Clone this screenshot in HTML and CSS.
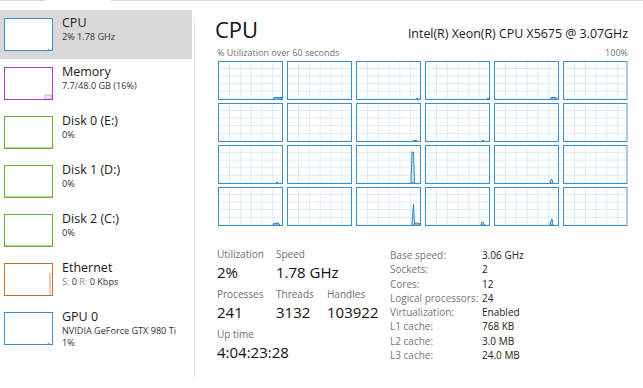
FILE: index.html
```html
<!DOCTYPE html>
<html lang="en">
<head>
    <meta charset="UTF-8">
    <meta name="viewport" content="width=device-width, initial-scale=1.0">
    <title>Task Manager - Performance</title>
    <link rel="stylesheet" href="styles.css">
</head>
<body>
    <div class="tabline">
        <span class="tabline-left"></span>
        <span class="tabline-gap"></span>
        <span class="tabline-right"></span>
    </div>

    <div class="app">
        <ul class="sidebar">
            <li class="item selected">
                <div class="thumb thumb-cpu">
                    <svg viewBox="0 0 47 31"><path d="M43,31 L43.5,30 L44,31Z" fill="#3a8fc8" stroke="#3a8fc8" stroke-width="0.8"/></svg>
                </div>
                <div class="item-text">
                    <div class="item-title">CPU</div>
                    <div class="item-sub">2% 1.78 GHz</div>
                </div>
            </li>
            <li class="item">
                <div class="thumb thumb-mem">
                    <svg viewBox="0 0 47 31"><path d="M40,31 L40,27 L47,27 L47,31Z" fill="#f1e4f6" stroke="#c792db" stroke-width="0.8"/></svg>
                </div>
                <div class="item-text">
                    <div class="item-title">Memory</div>
                    <div class="item-sub">7.7/48.0 GB (16%)</div>
                </div>
            </li>
            <li class="item">
                <div class="thumb thumb-disk">
                    <svg viewBox="0 0 47 31"><path d="M0,30.5 L47,30.5" stroke="#b9dd9f" stroke-width="1"/></svg>
                </div>
                <div class="item-text">
                    <div class="item-title">Disk 0 (E:)</div>
                    <div class="item-sub">0%</div>
                </div>
            </li>
            <li class="item">
                <div class="thumb thumb-disk">
                    <svg viewBox="0 0 47 31"><path d="M0,30.5 L47,30.5" stroke="#b9dd9f" stroke-width="1"/></svg>
                </div>
                <div class="item-text">
                    <div class="item-title">Disk 1 (D:)</div>
                    <div class="item-sub">0%</div>
                </div>
            </li>
            <li class="item">
                <div class="thumb thumb-disk">
                    <svg viewBox="0 0 47 31"><path d="M0,30.5 L47,30.5" stroke="#b9dd9f" stroke-width="1"/><path d="M42,31 L42.5,30 L43,31Z" fill="#66b032"/></svg>
                </div>
                <div class="item-text">
                    <div class="item-title">Disk 2 (C:)</div>
                    <div class="item-sub">0%</div>
                </div>
            </li>
            <li class="item">
                <div class="thumb thumb-eth">
                    <svg viewBox="0 0 47 31"><path d="M44.5,31 L44.5,9 L45.5,9 L45.5,31Z" fill="#f0d4b8" stroke="#e3b98f" stroke-width="0.6"/></svg>
                </div>
                <div class="item-text">
                    <div class="item-title">Ethernet</div>
                    <div class="item-sub"><span class="dim">S:</span> 0 <span class="dim">R:</span> 0 Kbps</div>
                </div>
            </li>
            <li class="item">
                <div class="thumb thumb-gpu">
                    <svg viewBox="0 0 47 31"><path d="M43,31 L43.5,30 L44,31Z" fill="#3a8fc8" stroke="#3a8fc8" stroke-width="0.8"/></svg>
                </div>
                <div class="item-text">
                    <div class="item-title">GPU 0</div>
                    <div class="item-sub">NVIDIA GeForce GTX 980 Ti</div>
                    <div class="item-sub">1%</div>
                </div>
            </li>
        </ul>

        <div class="divider"></div>

        <main class="detail">
            <div class="detail-head">
                <h1>CPU</h1>
                <span class="model">Intel(R) Xeon(R) CPU X5675 @ 3.07GHz</span>
            </div>
            <div class="graph-caption">
                <span>% Utilization over 60 seconds</span>
                <span>100%</span>
            </div>

            <div class="graphs">
                <!-- row 1 -->
                <div class="graph"><svg viewBox="0 0 63 37" preserveAspectRatio="none"><path d="M54,37 L55,35.5 L63,35.5 L63,37Z"/></svg></div>
                <div class="graph"></div>
                <div class="graph"><svg viewBox="0 0 63 37" preserveAspectRatio="none"><path d="M59,37 L60,36 L61,37Z"/></svg></div>
                <div class="graph"><svg viewBox="0 0 63 37" preserveAspectRatio="none"><path d="M61,37 L62,36 L63,37Z"/></svg></div>
                <div class="graph"><svg viewBox="0 0 63 37" preserveAspectRatio="none"><path d="M55,37 L56,35.5 L61,35.5 L62,37Z"/></svg></div>
                <div class="graph"></div>
                <!-- row 2 -->
                <div class="graph"></div>
                <div class="graph"></div>
                <div class="graph"><svg viewBox="0 0 63 37" preserveAspectRatio="none"><path d="M56,37 L57,36 L58,37 L59,36 L60,37Z"/></svg></div>
                <div class="graph"><svg viewBox="0 0 63 37" preserveAspectRatio="none"><path d="M56,37 L57,36 L58,37Z"/></svg></div>
                <div class="graph"></div>
                <div class="graph"></div>
                <!-- row 3 -->
                <div class="graph"><svg viewBox="0 0 63 37" preserveAspectRatio="none"><path d="M57,37 L58,36 L59,37Z"/></svg></div>
                <div class="graph"></div>
                <div class="graph"><svg viewBox="0 0 63 37" preserveAspectRatio="none"><path d="M54,37 L55,6 L56.5,6 L57.5,37Z"/></svg></div>
                <div class="graph"></div>
                <div class="graph"><svg viewBox="0 0 63 37" preserveAspectRatio="none"><path d="M55,37 L56,33.5 L57,33.5 L58,37Z"/></svg></div>
                <div class="graph"></div>
                <!-- row 4 -->
                <div class="graph"><svg viewBox="0 0 63 37" preserveAspectRatio="none"><path d="M54,37 L55,35 L56,36 L57,34.5 L58,36 L59,34.5 L60,36 L61,37Z"/></svg></div>
                <div class="graph"></div>
                <div class="graph"><svg viewBox="0 0 63 37" preserveAspectRatio="none"><path d="M55,37 L56.5,16 L57.5,36 L59,35 L63,35.5 L63,37Z"/></svg></div>
                <div class="graph"><svg viewBox="0 0 63 37" preserveAspectRatio="none"><path d="M55,37 L56,34 L57,34 L58,36 L59,37Z"/></svg></div>
                <div class="graph"><svg viewBox="0 0 63 37" preserveAspectRatio="none"><path d="M55,37 L57,31 L58,37Z"/></svg></div>
                <div class="graph"></div>
            </div>

            <div class="stats">
                <div class="stats-main">
                    <div class="stat-row">
                        <div class="stat col-a">
                            <div class="stat-label">Utilization</div>
                            <div class="stat-value">2%</div>
                        </div>
                        <div class="stat col-b">
                            <div class="stat-label">Speed</div>
                            <div class="stat-value">1.78 GHz</div>
                        </div>
                    </div>
                    <div class="stat-row">
                        <div class="stat col-a">
                            <div class="stat-label">Processes</div>
                            <div class="stat-value">241</div>
                        </div>
                        <div class="stat col-b">
                            <div class="stat-label">Threads</div>
                            <div class="stat-value">3132</div>
                        </div>
                        <div class="stat">
                            <div class="stat-label">Handles</div>
                            <div class="stat-value">103922</div>
                        </div>
                    </div>
                    <div class="stat-row">
                        <div class="stat">
                            <div class="stat-label">Up time</div>
                            <div class="stat-value">4:04:23:28</div>
                        </div>
                    </div>
                </div>

                <div class="specs">
                    <span class="spec-label">Base speed:</span><span>3.06 GHz</span>
                    <span class="spec-label">Sockets:</span><span>2</span>
                    <span class="spec-label">Cores:</span><span>12</span>
                    <span class="spec-label">Logical processors:</span><span>24</span>
                    <span class="spec-label">Virtualization:</span><span>Enabled</span>
                    <span class="spec-label">L1 cache:</span><span>768 KB</span>
                    <span class="spec-label">L2 cache:</span><span>3.0 MB</span>
                    <span class="spec-label">L3 cache:</span><span>24.0 MB</span>
                </div>
            </div>
        </main>
    </div>
</body>
</html>
```

FILE: styles.css
```css
body {
    font-family: "Open Sans", "Noto Sans", sans-serif;
    background-color: #fff;
    color: #1a1a1a;
    margin: 0;
    padding: 0;
    width: 643px;
    height: 388px;
    overflow: hidden;
}

/* tab strip bottom line, with a gap under the selected tab */
.tabline {
    display: flex;
    height: 1px;
}
.tabline-left {
    width: 45px;
    background-color: #dadada;
}
.tabline-gap {
    width: 66px;
}
.tabline-right {
    flex: 1;
    background-color: #dadada;
}

.app {
    display: flex;
    margin-top: 9px;
}

/* left list */
.sidebar {
    list-style: none;
    margin: 0 2px 0 0;
    padding: 0;
    width: 192px;
}
.item {
    display: flex;
    box-sizing: border-box;
    height: 49px;
    padding: 8px 0 0 4px;
    gap: 9px;
}
.item.selected {
    background-color: #d9d9d9;
}
.thumb {
    width: 47px;
    height: 31px;
    border: 1px solid;
    background: #fff;
    flex-shrink: 0;
}
.thumb svg {
    display: block;
    width: 100%;
    height: 100%;
}
.thumb-cpu,
.thumb-gpu {
    border-color: #3a8fc8;
}
.thumb-mem {
    border-color: #a440c8;
}
.thumb-disk {
    border-color: #68b236;
}
.thumb-eth {
    border-color: #b8722c;
}
.item-text {
    margin-top: -2px;
    white-space: nowrap;
}
.item-title {
    font-size: 12.5px;
    line-height: 14px;
    color: #1a1a1a;
}
.item-sub {
    font-size: 9.1px;
    line-height: 12px;
    color: #333;
    margin-top: 1px;
}
.item-sub + .item-sub {
    margin-top: 0;
}
.item-sub .dim {
    color: #8a8a8a;
}

.divider {
    width: 1px;
    height: 360px;
    margin-top: 8px;
    background-color: #e6e6e6;
}

/* right panel */
.detail {
    flex: 1;
    padding: 6px 15px 0 22px;
}
.detail-head {
    display: flex;
    justify-content: space-between;
    align-items: baseline;
    height: 26px;
}
.detail-head h1 {
    margin: 0 0 0 -2px;
    font-size: 22px;
    line-height: 26px;
    font-weight: normal;
    color: #111;
}
.model {
    font-size: 12.4px;
    color: #1a1a1a;
}
.graph-caption {
    display: flex;
    justify-content: space-between;
    font-size: 9px;
    line-height: 12px;
    color: #707070;
    margin-top: 5px;
    margin-bottom: 2px;
}

.graphs {
    display: grid;
    grid-template-columns: repeat(6, 1fr);
    grid-auto-rows: 39px;
    column-gap: 4px;
    row-gap: 3px;
    margin-left: 1px;
}
.graph {
    border: 1px solid #3d8fc6;
    background-color: #fff;
    background-image:
        linear-gradient(to right, #dcebf5 1px, transparent 1px),
        linear-gradient(to bottom, #dcebf5 1px, transparent 1px);
    background-size: 10.8px 100%, 100% 7.6px;
    background-position: 10px 0, 0 6px;
}
.graph:nth-child(6n) {
    border-right: 2px solid #a9cde8;
}
.graph svg {
    display: block;
    width: 100%;
    height: 100%;
}
.graph path {
    fill: #d6e8f4;
    stroke: #2f86c0;
    stroke-width: 1;
    vector-effect: non-scaling-stroke;
}

/* stats under the graphs */
.stats {
    display: flex;
    margin-top: 22px;
}
.stats-main {
    width: 173px;
}
.stat-row {
    display: flex;
    margin-bottom: 7px;
}
.stat {
    white-space: nowrap;
}
.col-a {
    width: 59px;
}
.col-b {
    width: 51px;
}
.stat-label {
    font-size: 10px;
    line-height: 13px;
    color: #707070;
}
.stat-value {
    font-size: 15px;
    line-height: 18px;
    margin-top: 2px;
    color: #111;
}

.specs {
    display: grid;
    grid-template-columns: 92px auto;
    grid-auto-rows: 14.3px;
    font-size: 10px;
    line-height: 14.3px;
    color: #222;
    white-space: nowrap;
}
.specs .spec-label {
    color: #777;
}
```
